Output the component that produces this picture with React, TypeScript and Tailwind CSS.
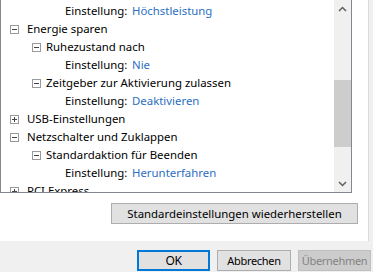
const font = { fontFamily: '"Noto Sans", "Open Sans", sans-serif' };

type Row = { level: number; label: string; value?: string; toggle?: "minus" | "plus" };

const rows: Row[] = [
  { level: 2, label: "Einstellung:", value: "Höchstleistung" },
  { level: 0, label: "Energie sparen", toggle: "minus" },
  { level: 1, label: "Ruhezustand nach", toggle: "minus" },
  { level: 2, label: "Einstellung:", value: "Nie" },
  { level: 1, label: "Zeitgeber zur Aktivierung zulassen", toggle: "minus" },
  { level: 2, label: "Einstellung:", value: "Deaktivieren" },
  { level: 0, label: "USB-Einstellungen", toggle: "plus" },
  { level: 0, label: "Netzschalter und Zuklappen", toggle: "minus" },
  { level: 1, label: "Standardaktion für Beenden", toggle: "minus" },
  { level: 2, label: "Einstellung:", value: "Herunterfahren" },
  { level: 0, label: "PCI Express", toggle: "plus" },
];

function Toggle({ kind }: { kind: "minus" | "plus" }) {
  return (
    <svg width="9" height="9" viewBox="0 0 9 9" className="shrink-0">
      <rect x="0.5" y="0.5" width="8" height="8" fill="#fff" stroke="#9a9a9a" />
      <line x1="2" y1="4.5" x2="7" y2="4.5" stroke="#444" />
      {kind === "plus" && <line x1="4.5" y1="2" x2="4.5" y2="7" stroke="#444" />}
    </svg>
  );
}

function TreeRow({ row }: { row: Row }) {
  if (row.level === 2) {
    return (
      <div className="h-[18px] flex items-center pl-[64px] whitespace-nowrap">
        <span className="w-[67px] text-black">{row.label}</span>
        <span className="text-[#2b6fc2]">{row.value}</span>
      </div>
    );
  }
  const pad = row.level === 0 ? "pl-[9px]" : "pl-[31px]";
  return (
    <div className={`h-[18px] flex items-center whitespace-nowrap ${pad}`}>
      {row.toggle && <Toggle kind={row.toggle} />}
      <span className={row.level === 0 ? "ml-[8px] text-black" : "ml-[5px] text-black"}>{row.label}</span>
    </div>
  );
}

function Chevron({ up }: { up?: boolean }) {
  return (
    <svg width="9" height="6" viewBox="0 0 9 6">
      <polyline
        points={up ? "1,5 4.5,1.5 8,5" : "1,1 4.5,4.5 8,1"}
        fill="none"
        stroke="#606060"
        strokeWidth="1.5"
      />
    </svg>
  );
}

export default function App() {
  return (
    <div className="w-[373px] h-[272px] bg-[#f0f0f0] flex flex-col overflow-hidden text-[11.4px]" style={font}>
      <div className="h-[241px] w-[369px] bg-white border-r border-[#dadada] flex flex-col">
        {/* tree view */}
        <div className="h-[193px] w-[352px] border-l border-r border-b border-[#828790] flex overflow-hidden">
          <div className="flex-1 pt-[2px] overflow-hidden">
            {rows.map((r, i) => (
              <TreeRow key={i} row={r} />
            ))}
          </div>
          <div className="w-[17px] bg-[#f0f0f0] flex flex-col">
            <div className="h-[17px] flex items-center justify-center">
              <Chevron up />
            </div>
            <div className="h-[63px]" />
            <div className="h-[67px] bg-[#cdcdcd]" />
            <div className="flex-1" />
            <div className="h-[17px] flex items-center justify-center">
              <Chevron />
            </div>
          </div>
        </div>
        <button className="mt-[10px] ml-[111px] w-[247px] h-[21px] bg-[#e1e1e1] border border-[#adadad] text-black leading-none">
          Standardeinstellungen wiederherstellen
        </button>
      </div>
      <div className="flex gap-[7px] pl-[137px] pt-[9px] text-[11px] tracking-[-0.3px]">
        <button className="w-[73px] h-[21px] bg-[#e1e1e1] border-2 border-[#0078d7] text-black leading-none text-[12px]">
          OK
        </button>
        <button className="w-[74px] h-[21px] bg-[#e1e1e1] border border-[#adadad] text-black leading-none">
          Abbrechen
        </button>
        <button className="w-[73px] h-[21px] bg-[#cccccc] border border-[#bfbfbf] text-[#838383] leading-none">
          Übernehmen
        </button>
      </div>
    </div>
  );
}
